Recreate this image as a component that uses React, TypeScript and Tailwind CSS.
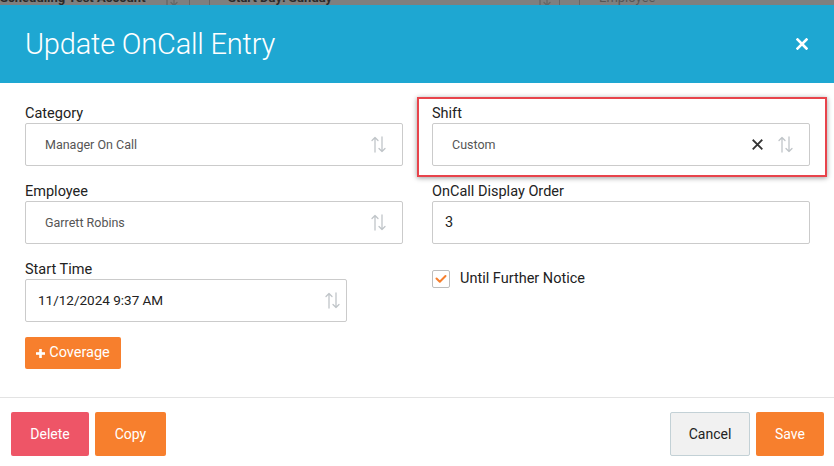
import React from "react";

const SortIcon = () => (
  <svg width="15" height="17" viewBox="0 0 15 17" fill="none" stroke="currentColor" strokeWidth="1.3" strokeLinecap="round" strokeLinejoin="round">
    <path d="M4 16V1.5M1 4.5L4 1.5L7 4.5" />
    <path d="M11 1V15.5M8 12.5L11 15.5L14 12.5" />
  </svg>
);

const SmallX = ({ size = 11, stroke = 2 }: { size?: number; stroke?: number }) => (
  <svg width={size} height={size} viewBox="0 0 12 12" fill="none" stroke="currentColor" strokeWidth={stroke} strokeLinecap="square">
    <path d="M1.5 1.5L10.5 10.5M10.5 1.5L1.5 10.5" />
  </svg>
);

function Label({ children }: { children: React.ReactNode }) {
  return <div className="text-[14.5px] leading-[17px] mb-px text-[#222]">{children}</div>;
}

function Select({ value, clear }: { value: string; clear?: boolean }) {
  return (
    <div className="h-[43px] border border-[#cbcbcb] rounded-[2px] flex items-center pl-[19px] pr-[16px] bg-white">
      <span className="flex-1 text-[12.5px] text-[#555] pt-px">{value}</span>
      {clear && (
        <span className="text-[#333] mr-[15px] flex items-center">
          <SmallX size={11} stroke={2} />
        </span>
      )}
      <span className="text-[#c0c5c9] flex items-center">
        <SortIcon />
      </span>
    </div>
  );
}

export default function App() {
  return (
    <div className="w-[834px] h-[466px] overflow-hidden bg-white font-['Roboto',sans-serif]">
      {/* dimmed page behind the modal */}
      <div className="h-[5px] overflow-hidden bg-[#7f7f7f]">
        <div className="-mt-[9px] flex items-center h-[14px] text-[13px] font-bold text-[#2a2a2a] whitespace-nowrap">
          <span className="w-[150px]">Scheduling Test Account</span>
          <span className="ml-[13px] text-[#666]"><SortIcon /></span>
          <span className="ml-[11px] w-px h-[14px] bg-[#666]"></span>
          <span className="ml-[19px] w-px h-[14px] bg-[#666]"></span>
          <span className="ml-[18px] w-[308px]">Start Day: Sunday</span>
          <span className="text-[#666]"><SortIcon /></span>
          <span className="ml-[8px] w-px h-[14px] bg-[#666]"></span>
          <span className="ml-[19px] w-px h-[14px] bg-[#666]"></span>
          <span className="ml-[19px] font-normal text-[#555]">Employee</span>
        </div>
      </div>

      {/* header */}
      <div className="h-[78px] bg-[#1ea7d2] flex items-center justify-between pl-[25px] pr-[26px]">
        <h1 className="text-[29px] font-light text-white leading-none tracking-[-0.2px]">Update OnCall Entry</h1>
        <span className="text-white flex items-center">
          <SmallX size={12} stroke={2.6} />
        </span>
      </div>

      {/* body */}
      <div className="pt-[22px] pb-[28px] pl-[25px] pr-[24px]">
        <div className="grid grid-cols-2 gap-x-[29px] gap-y-[17px]">
          <div>
            <Label>Category</Label>
            <Select value="Manager On Call" />
          </div>
          <div className="relative">
            <div className="absolute -left-[15px] -right-[17px] -top-[8px] -bottom-[11px] border-2 border-[#e8444c] shadow-[0_1px_5px_rgba(0,0,0,0.4)] pointer-events-none"></div>
            <Label>Shift</Label>
            <Select value="Custom" clear />
          </div>
          <div>
            <Label>Employee</Label>
            <Select value="Garrett Robins" />
          </div>
          <div>
            <Label>OnCall Display Order</Label>
            <div className="h-[43px] border border-[#cbcbcb] rounded-[2px] flex items-center pl-[12px] text-[14.5px] text-[#222]">3</div>
          </div>
          <div>
            <Label>Start Time</Label>
            <div className="w-[322px] h-[43px] border border-[#cbcbcb] rounded-[2px] flex items-center pl-[12px] pr-[6px]">
              <span className="flex-1 text-[13.5px] text-[#222]">11/12/2024 9:37 AM</span>
              <span className="text-[#c0c5c9] flex items-center"><SortIcon /></span>
            </div>
            <button className="mt-[15px] h-[32px] w-[96px] rounded-[2px] bg-[#f77f2d] text-white text-[14.5px] flex items-center justify-center gap-[4px]">
              <svg width="9" height="9" viewBox="0 0 9 9" fill="white">
                <rect x="3.2" y="0" width="2.6" height="9" />
                <rect x="0" y="3.2" width="9" height="2.6" />
              </svg>
              Coverage
            </button>
          </div>
          <div>
            <label className="mt-[7px] flex items-center gap-[10px] text-[14.5px] text-[#222]">
              <span className="w-[18px] h-[18px] border border-[#bdbdbd] rounded-[2px] flex items-center justify-center bg-white">
                <svg width="12" height="10" viewBox="0 0 12 10" fill="none" stroke="#f77f2d" strokeWidth="2" strokeLinecap="round" strokeLinejoin="round">
                  <path d="M1.5 4.5L4.8 7.8L10.5 2" />
                </svg>
              </span>
              Until Further Notice
            </label>
          </div>
        </div>
      </div>

      {/* footer */}
      <div className="border-t border-[#e3e3e3] pt-[14px] pl-[11px] pr-[10px] flex justify-between">
        <div className="flex gap-[6px]">
          <button className="w-[78px] h-[44px] rounded-[2px] bg-[#ee5567] text-white text-[14px]">Delete</button>
          <button className="w-[71px] h-[44px] rounded-[2px] bg-[#f77f2d] text-white text-[14px]">Copy</button>
        </div>
        <div className="flex gap-[6px]">
          <button className="w-[80px] h-[44px] rounded-[2px] bg-[#f1f1f1] border border-[#c3d1d6] text-[#222] text-[14px]">Cancel</button>
          <button className="w-[68px] h-[44px] rounded-[2px] bg-[#f77f2d] text-white text-[14px]">Save</button>
        </div>
      </div>
    </div>
  );
}
